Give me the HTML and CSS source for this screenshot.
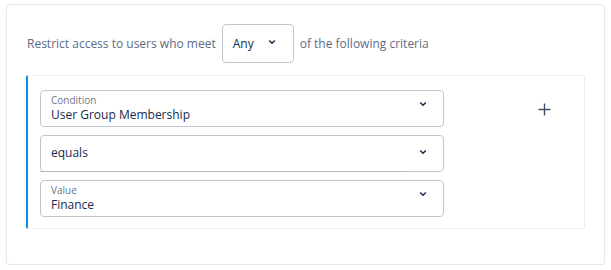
FILE: index.html
```html
<!DOCTYPE html>
<html>
<head>
<meta charset="utf-8">
<link rel="stylesheet" href="styles.css">
</head>
<body>
<div class="card">
  <div class="header">
    <span class="lead">Restrict access to users who meet</span>
    <div class="mini-select">
      <span>Any</span>
      <svg class="chev" width="8" height="6" viewBox="0 0 8 6"><path d="M1.2 1.5 L4 4.2 L6.8 1.5" fill="none" stroke="#172b4d" stroke-width="1.5"/></svg>
    </div>
    <span class="lead">of the following criteria</span>
  </div>
  <div class="panel">
    <div class="fields">
      <div class="field">
        <div class="field-text">
          <span class="label">Condition</span>
          <span class="value">User Group Membership</span>
        </div>
        <svg class="chev" width="8" height="6" viewBox="0 0 8 6"><path d="M1.2 1.5 L4 4.2 L6.8 1.5" fill="none" stroke="#172b4d" stroke-width="1.5"/></svg>
      </div>
      <div class="field single">
        <div class="field-text">
          <span class="value">equals</span>
        </div>
        <svg class="chev" width="8" height="6" viewBox="0 0 8 6"><path d="M1.2 1.5 L4 4.2 L6.8 1.5" fill="none" stroke="#172b4d" stroke-width="1.5"/></svg>
        <span class="underline"></span>
      </div>
      <div class="field">
        <div class="field-text">
          <span class="label">Value</span>
          <span class="value">Finance</span>
        </div>
        <svg class="chev" width="8" height="6" viewBox="0 0 8 6"><path d="M1.2 1.5 L4 4.2 L6.8 1.5" fill="none" stroke="#172b4d" stroke-width="1.5"/></svg>
      </div>
    </div>
    <div class="add">
      <svg width="13" height="13" viewBox="0 0 13 13"><path d="M6.5 0.5 V12.5 M0.5 6.5 H12.5" stroke="#42526e" stroke-width="1.4" fill="none"/></svg>
    </div>
  </div>
</div>
</body>
</html>
```
FILE: styles.css
```css
* { box-sizing: border-box; }
html, body { margin: 0; padding: 0; background: #ffffff; }
body {
  font-family: "Open Sans", "Noto Sans", sans-serif;
  font-size: 12px;
  color: #172b4d;
  padding: 4px 6px 0 6px;
}
.card {
  width: 599px;
  height: 261px;
  border: 1px solid #e4e9f0;
  border-radius: 4px;
  box-shadow: 0 2px 1px rgba(9, 30, 66, 0.08);
  padding: 19px 19px 0 20px;
}
.header {
  display: flex;
  align-items: center;
  gap: 6px;
  height: 39px;
}
.lead {
  color: #5e6c84;
}
.mini-select {
  width: 72px;
  height: 39px;
  border: 1px solid #c1c7d0;
  border-radius: 4px;
  display: flex;
  align-items: center;
  justify-content: space-between;
  padding: 0 17px 0 10px;
  color: #172b4d;
}
.mini-select .chev { margin-top: -3px; }
.panel {
  margin-top: 12px;
  margin-left: -1px;
  height: 154px;
  border: 1px solid #ebeef2;
  border-left: 2px solid #0c8ce9;
  border-radius: 2px;
  padding: 14px 0 0 12px;
  display: flex;
}
.fields {
  width: 404px;
  display: flex;
  flex-direction: column;
  gap: 8px;
}
.field {
  position: relative;
  height: 37px;
  border: 1px solid #c1c7d0;
  border-radius: 4px;
  display: flex;
  align-items: center;
  justify-content: space-between;
  padding: 0 16px 0 10px;
}
.field-text {
  display: flex;
  flex-direction: column;
}
.label {
  font-size: 10px;
  line-height: 13px;
  color: #6b778c;
  margin-top: -1px;
}
.value {
  font-size: 12px;
  line-height: 16px;
  color: #172b4d;
}
.field .chev { margin-top: -10px; }
.field.single .chev { margin-top: -4px; }
.field.single .value { margin-top: -2px; }
.underline {
  position: absolute;
  left: -1px;
  bottom: -1px;
  width: 367px;
  height: 1px;
  background: #b3bac5;
}
.add {
  margin-left: 94px;
  margin-top: 13px;
  width: 13px;
  height: 13px;
  display: flex;
}
```
